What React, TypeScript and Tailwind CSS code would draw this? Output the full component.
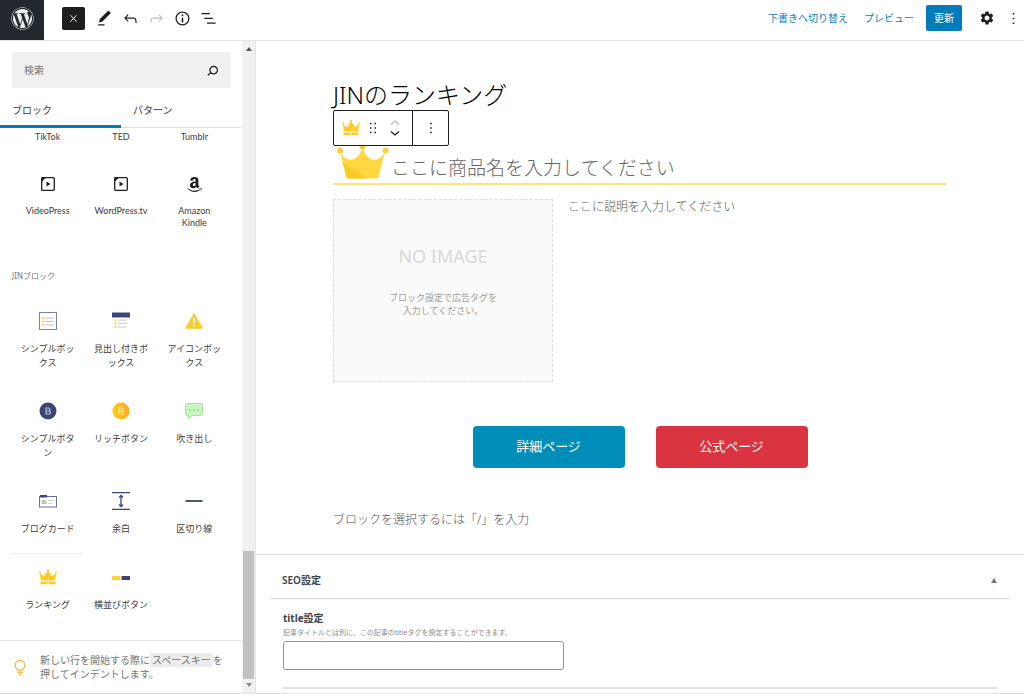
import type { ReactNode } from "react";
import { FaAmazon, FaWordpress } from "react-icons/fa";
import { MdSettings } from "react-icons/md";

type Block = {
  label: string;
  icon: ReactNode;
  active?: boolean;
};

function Glyph({ d, size = 19 }: { d: string; size?: number }) {
  return (
    <svg width={size} height={size} viewBox="0 0 24 24" fill="currentColor" aria-hidden="true">
      <path d={d} />
    </svg>
  );
}

const paths = {
  edit: "M20.1 5.1L16.9 2 6.2 12.7l-1.3 4.4 4.5-1.3L20.1 5.1zM4 20.8h8v-1.5H4v1.5z",
  undo: "M18.3 11.7c-.6-.6-1.4-.9-2.3-.9H6.7l2.9-3.3-1.1-1-4.5 5L8.5 16l1-1-2.7-2.7H16c.5 0 .9.2 1.3.5 1 1 1 3.4 1 4.5v.3h1.5v-.2c0-1.5 0-4.3-1.5-5.7z",
  redo: "M15.6 6.5l-1.1 1 2.9 3.3H8c-.9 0-1.7.3-2.3.9-1.4 1.5-1.4 4.2-1.4 5.6v.2h1.5v-.3c0-1.1 0-3.5 1-4.5.3-.3.7-.5 1.3-.5h9.2L14.5 15l1.1 1.1 4.6-4.6-4.6-5z",
  list: "M13.8 5.2H3v1.5h10.8V5.2zm-3.6 12v1.5H21v-1.5H10.2zm7.2-6H6.6v1.5h10.8v-1.5z",
  info: "M12 3.2c-4.8 0-8.8 3.9-8.8 8.8 0 4.8 3.9 8.8 8.8 8.8 4.8 0 8.8-3.9 8.8-8.8 0-4.8-4-8.8-8.8-8.8zm0 16c-4 0-7.2-3.3-7.2-7.2C4.8 8 8 4.8 12 4.8s7.2 3.3 7.2 7.2c0 4-3.2 7.2-7.2 7.2zM11 17h2v-6h-2v6zm0-8h2V7h-2v2z",
  search:
    "M13.5 6C10.5 6 8 8.5 8 11.5c0 1.1.3 2.1.9 3l-3.4 3 1 1.1 3.4-2.9c1 .9 2.2 1.4 3.6 1.4 3 0 5.5-2.5 5.5-5.5C19 8.5 16.5 6 13.5 6zm0 9.5c-2.2 0-4-1.8-4-4s1.8-4 4-4 4 1.8 4 4-1.8 4-4 4z",
  close: "M13 11.8l6.1-6.3-1-1-6.1 6.2-6.1-6.2-1 1 6.1 6.3-6.5 6.7 1 1 6.5-6.6 6.5 6.6 1-1z",
  more: "M13 19h-2v-2h2v2zm0-6h-2v-2h2v2zm0-6h-2V5h2v2z",
  drag: "M8 7h2V5H8v2zm0 6h2v-2H8v2zm0 6h2v-2H8v2zm6-14v2h2V5h-2zm0 8h2v-2h-2v2zm0 6h2v-2h-2v2z",
};

function CrownIcon() {
  return (
    <svg width="18" height="18" viewBox="0 0 18 18" fill="#fbcb2d" aria-hidden="true">
      <path d="M1.800 12.500.8 5l4.200 3.200L9 2l4 6.200L17.200 5l-1 7.500z" />
      <circle cx="1" cy="4.600" r="1" />
      <circle cx="9" cy="1.800" r="1.100" />
      <circle cx="17" cy="4.600" r="1" />
      <rect x="1.500" y="13.500" width="7" height="2.800" />
      <rect x="9.500" y="13.500" width="7" height="2.800" />
    </svg>
  );
}

function VideoIcon() {
  return (
    <svg width="18" height="18" viewBox="0 0 18 18" aria-hidden="true">
      <rect x="2.700" y="2.700" width="12.600" height="12.600" rx="1" fill="none" stroke="#1e1e1e" strokeWidth="1.300" />
      <path d="M2.500 2.500h4.500L2.500 7z" fill="#1e1e1e" />
      <path d="M7.500 6.500v5l4-2.500z" fill="#1e1e1e" />
    </svg>
  );
}

function SimpleBoxIcon() {
  return (
    <svg width="18" height="18" viewBox="0 0 18 18" aria-hidden="true">
      <rect x=".5" y=".5" width="17" height="17" fill="#fff" stroke="#7781ab" />
      <path d="M3 6h2M3 9.500h2M3 13h2" stroke="#fbd45c" strokeWidth="1.800" />
      <path d="M6 6h9M6 9.500h9M6 13h9" stroke="#c4c4c4" />
    </svg>
  );
}

function HeadingBoxIcon() {
  return (
    <svg width="18" height="18" viewBox="0 0 18 18" aria-hidden="true">
      <rect y="0.500" width="18" height="5" fill="#3b4675" />
      <path d="M2.500 8h2M2.500 11.500h2M2.500 15h2" stroke="#fbd45c" strokeWidth="1.800" />
      <path d="M6 8h9M6 11.500h9M6 15h9" stroke="#c8c8c8" />
    </svg>
  );
}

function WarningIcon() {
  return (
    <svg width="18" height="18" viewBox="0 0 18 18" aria-hidden="true">
      <path d="M9 2 17 16H1z" fill="#fcca2c" stroke="#fcca2c" strokeWidth="1.400" strokeLinejoin="round" />
      <path d="M9 6v5M9 12.500v2" stroke="#fff" strokeWidth="1.800" />
    </svg>
  );
}

function BadgeIcon({ rich }: { rich?: boolean }) {
  return (
    <svg width="18" height="18" viewBox="0 0 18 18" aria-hidden="true">
      <defs>
        <linearGradient id="gold">
          <stop offset="0" stopColor="#fdd00f" />
          <stop offset="1" stopColor="#fca52c" />
        </linearGradient>
      </defs>
      <circle cx="9" cy="9" r="8.500" fill={rich ? "url(#gold)" : "#3b4675"} />
      <path
        d="M7 6h2.500a1.400 1.400 0 0 1 0 3H7zM7 9h3a1.500 1.500 0 0 1 0 3H7z"
        fill="none"
        stroke={rich ? "#ffe9a8" : "#c3c8dc"}
        strokeWidth="1.100"
      />
    </svg>
  );
}

function BalloonIcon() {
  return (
    <svg width="18" height="18" viewBox="0 0 18 18" aria-hidden="true">
      <path
        d="M2.500 1.500h13a2 2 0 0 1 2 2v8a2 2 0 0 1-2 2H7.500L3.500 16.500v-3h-1a2 2 0 0 1-2-2v-8a2 2 0 0 1 2-2z"
        fill="#c9f5c2"
        stroke="#a3e29b"
      />
      <path d="M4 8h2M8 8h2M12 8h2" stroke="#92d38b" strokeWidth="1.600" />
    </svg>
  );
}

function BlogCardIcon() {
  return (
    <svg width="18" height="18" viewBox="0 0 18 18" aria-hidden="true">
      <rect x=".5" y="4.500" width="17" height="10.500" fill="#fff" stroke="#6670a0" />
      <path d="M1 3h7v2.500H1z" fill="#3b4675" />
      <path d="M2.500 8h5v4h-5z" fill="#c4c4c4" />
      <path d="M9 8.500h6.500M9 11.500h4.500" stroke="#cfcfcf" />
    </svg>
  );
}

function SpacerIcon() {
  return (
    <svg width="18" height="18" viewBox="0 0 18 18" fill="none" stroke="#3b4675" aria-hidden="true">
      <path d="M0 .7h18M0 17.300h18" strokeWidth="1.300" />
      <path d="M9 3.500v11M7 5.500l2-2 2 2M7 12.500l2 2 2-2" strokeWidth="1.300" />
    </svg>
  );
}

function LineIcon() {
  return (
    <svg width="18" height="18" viewBox="0 0 18 18" aria-hidden="true">
      <path d="M.5 8h17v2H.5z" fill="#4a5482" />
    </svg>
  );
}

function TwinButtonIcon() {
  return (
    <svg width="18" height="18" viewBox="0 0 18 18" aria-hidden="true">
      <path d="M0 8h8.500v4H0z" fill="#fcd042" />
      <path d="M9.500 8H18v4H9.500z" fill="#3b4675" />
    </svg>
  );
}

const embeds: Block[] = [
  { label: "VideoPress", icon: <VideoIcon /> },
  { label: "WordPress.tv", icon: <VideoIcon /> },
  { label: "Amazon Kindle", icon: <FaAmazon size={17} className="text-[#1e1e1e]" /> },
];

const jinBlocks: Block[] = [
  { label: "シンプルボックス", icon: <SimpleBoxIcon /> },
  { label: "見出し付きボックス", icon: <HeadingBoxIcon /> },
  { label: "アイコンボックス", icon: <WarningIcon /> },
  { label: "シンプルボタン", icon: <BadgeIcon /> },
  { label: "リッチボタン", icon: <BadgeIcon rich /> },
  { label: "吹き出し", icon: <BalloonIcon /> },
  { label: "ブログカード", icon: <BlogCardIcon /> },
  { label: "余白", icon: <SpacerIcon /> },
  { label: "区切り線", icon: <LineIcon /> },
  { label: "ランキング", icon: <CrownIcon />, active: true },
  { label: "横並びボタン", icon: <TwinButtonIcon /> },
];

function BlockItem({ block }: { block: Block }) {
  return (
    <button type="button" className="relative flex flex-col items-center px-2 pt-4 pb-4">
      {block.active && <span className="absolute inset-x-0 top-px h-px bg-[#e8eef5]" />}
      <span className="flex h-[18px] items-center justify-center">{block.icon}</span>
      <span className="mt-3 w-full break-all">{block.label}</span>
    </button>
  );
}

function Header() {
  return (
    <header className="flex h-[41px] items-center border-b border-[#e2e2e2] pr-px text-[#1e1e1e]">
      <a href="#" aria-label="WordPress" className="flex h-10 w-11 items-center justify-center self-start bg-[#23282e] pb-1 text-[#e8eaec]">
        <FaWordpress size={23} />
      </a>
      <div className="flex items-center gap-[7px] pb-1 pl-[18px]">
        <button type="button" aria-label="閉じる" className="mr-[3px] flex size-[23px] items-center justify-center rounded-xs bg-[#1e1e1e] text-white">
          <Glyph d={paths.close} size={11} />
        </button>
        <button type="button" aria-label="ツール"><Glyph d={paths.edit} /></button>
        <button type="button" aria-label="元に戻す"><Glyph d={paths.undo} /></button>
        <button type="button" aria-label="やり直す" className="text-[#bdbdbd]"><Glyph d={paths.redo} /></button>
        <button type="button" aria-label="詳細"><Glyph d={paths.info} /></button>
        <button type="button" aria-label="リスト表示"><Glyph d={paths.list} /></button>
      </div>
      <div className="ml-auto flex items-center pb-1 text-[10px] text-[#0a7fbd]">
        <button type="button">下書きへ切り替え</button>
        <button type="button" className="ml-4">プレビュー</button>
        <button type="button" className="ml-3 flex h-[26px] w-9 items-center justify-center rounded-xs bg-[#007cba] text-white">更新</button>
        <button type="button" aria-label="設定" className="ml-[17px] text-[#1e1e1e]"><MdSettings size={16} /></button>
        <button type="button" aria-label="オプション" className="ml-[9px] text-[#1e1e1e]"><Glyph d={paths.more} /></button>
      </div>
    </header>
  );
}

function Inserter() {
  return (
    <aside className="flex w-[242px] shrink-0 flex-col bg-white text-[#3c3c3c]">
      <div className="mt-[11px] mr-[11px] ml-3 flex h-9 items-center rounded-xs bg-[#f0f0f0] pr-[9px] pl-3">
        <input type="text" aria-label="検索" placeholder="検索" className="min-w-0 flex-1 text-[10px] outline-none placeholder:text-[#757575]" />
        <button type="button" aria-label="検索する" className="text-[#1e1e1e]"><Glyph d={paths.search} /></button>
      </div>
      <div className="flex border-b border-[#e0e0e0] text-[10px]">
        <button type="button" className="-mb-px h-10 w-1/2 border-b-3 border-[#007cba] pt-2 pl-3 text-left">ブロック</button>
        <button type="button" className="h-9 w-1/2 pt-2 pl-3 text-left">パターン</button>
      </div>

      <div className="px-[11px] text-[9px]">
        <div className="grid grid-cols-3 pt-[3px] pb-4 text-center font-['Lato',sans-serif] leading-3">
          <span>TikTok</span>
          <span>TED</span>
          <span>Tumblr</span>
        </div>
        <div className="grid grid-cols-3 text-center font-['Lato',sans-serif] leading-3">
          {embeds.map((block) => (
            <button key={block.label} type="button" className="flex flex-col items-center pt-4 pb-4">
              <span className="flex h-[18px] items-center justify-center">{block.icon}</span>
              <span className="mt-3 max-w-16 px-1">{block.label}</span>
            </button>
          ))}
        </div>
        <h2 className="mt-6 mb-[13px] pl-px text-[8px] leading-[14px] text-[#757575]">JINブロック</h2>
        <div className="grid grid-cols-3 text-center leading-[14px]">
          {jinBlocks.map((block) => (
            <BlockItem key={block.label} block={block} />
          ))}
        </div>
      </div>

      <div className="mt-auto flex items-center gap-3 border-t border-[#e2e2e2] py-3 pl-3 text-[#757575]">
        <svg width="16" height="18" viewBox="0 0 16 18" fill="none" stroke="#f5bd4f" strokeWidth="1.400" aria-hidden="true">
          <path d="M6 12C4 10.800 3.200 9 3.200 7a4.800 4.800 0 0 1 9.600 0c0 2-.8 3.800-2.800 5z" />
          <path d="M5 14.200h6M6.500 16.500h3" />
        </svg>
        <p className="text-[10px] leading-[14px]">
          新しい行を開始する際に
          <kbd className="bg-[#ececec] px-0.5 font-[inherit]">スペースキー</kbd>を<br />
          押してインデントします。
        </p>
      </div>
    </aside>
  );
}

function ScrollTrack() {
  return (
    <div aria-hidden="true" className="flex w-[14px] shrink-0 flex-col items-center border-r border-[#e4e4e4] bg-[#f1f1f1] py-1.5">
      <svg width="6" height="4" viewBox="0 0 6 4" fill="#555"><path d="M3 0l3 4H0z" /></svg>
      <div className="mt-auto h-32 w-[11px] bg-[#c1c1c1]" />
      <svg width="6" height="4" viewBox="0 0 6 4" fill="#888" className="mt-1"><path d="M0 0h6L3 4z" /></svg>
    </div>
  );
}

function BlockToolbar() {
  return (
    <div className="absolute bottom-full left-0 flex h-9 rounded-xs border border-[#1e1e1e] bg-white text-[#1e1e1e]">
      <div className="flex items-center border-r border-[#1e1e1e] pr-3 pl-2">
        <button type="button" aria-label="ランキング"><CrownIcon /></button>
        <button type="button" aria-label="ドラッグ" className="ml-1"><Glyph d={paths.drag} size={18} /></button>
        <div className="ml-2 flex flex-col gap-1.5">
          <button type="button" aria-label="上に移動" className="text-[#b5b5b5]">
            <svg width="10" height="5" viewBox="0 0 10 5" fill="none" stroke="currentColor" strokeWidth="1.200"><path d="M1 4.500l4-3.500 4 3.500" /></svg>
          </button>
          <button type="button" aria-label="下に移動">
            <svg width="10" height="5" viewBox="0 0 10 5" fill="none" stroke="currentColor" strokeWidth="1.300"><path d="M1 .5L5 4 9 .5" /></svg>
          </button>
        </div>
      </div>
      <button type="button" aria-label="オプション" className="flex w-[35px] items-center justify-center">
        <Glyph d={paths.more} size={18} />
      </button>
    </div>
  );
}

function RankingBlock() {
  return (
    <section className="relative mt-[33px]">
      <BlockToolbar />
      <div className="flex h-[39px] items-start border-b-2 border-[#ffe283] pl-[3px]">
        <svg width="53" height="33" viewBox="0 0 53 33" aria-hidden="true">
          <path d="M4 6c5 9 16 13 22.500-4C33 19 44 15 49 6l-7 26.500H11z" fill="#ffd840" />
          <path d="M6.500 16c7 6 16 8 23 16.500H11z" fill="#f8cb25" />
          <circle cx="4" cy="4.500" r="3" fill="#fbcd35" />
          <circle cx="26.500" cy="0.500" r="3" fill="#fbcd35" />
          <circle cx="49.500" cy="4.500" r="3" fill="#fbcd35" />
        </svg>
        <p className="ml-0.5 pt-2 text-[19px] leading-7 font-light text-[#666]">ここに商品名を入力してください</p>
      </div>
      <div className="mt-[14px] flex gap-[15px]">
        <div className="flex h-[183px] w-[220px] shrink-0 flex-col items-center border border-dashed border-[#d9dce0] bg-[#fafafb] pt-11 text-center">
          <p className="text-[18px] leading-6 text-[#d8d8d8]">NO IMAGE</p>
          <p className="mt-[23px] text-[9px] leading-[13px] text-[#9a9a9a]">
            ブロック設定で広告タグを<br />入力してください。
          </p>
        </div>
        <p className="text-[12px] leading-4 font-light text-[#555]">ここに説明を入力してください</p>
      </div>
      <div className="mt-11 flex justify-center gap-[31px] text-[13px] text-white">
        <a href="#" className="flex h-[42px] w-[152px] items-center justify-center rounded bg-[#008db9]">詳細ページ</a>
        <a href="#" className="flex h-[42px] w-[152px] items-center justify-center rounded bg-[#d93440]">公式ページ</a>
      </div>
    </section>
  );
}

function SeoPanel() {
  return (
    <section className="mt-auto border-t border-[#e2e2e2] px-[15px] text-[#3c434a]">
      <button type="button" className="flex h-11 w-full items-center justify-between border-b border-[#cfd2d5] pt-2 pr-3 pl-[11px] text-left">
        <span className="text-[10px] font-semibold">SEO設定</span>
        <svg width="6" height="5" viewBox="0 0 6 5" fill="#6b7480" aria-hidden="true"><path d="M3 0l3 5H0z" /></svg>
      </button>
      <div className="mx-[11px] border-b-2 border-[#e2e2e2] pt-3 pb-[17px]">
        <label htmlFor="seo-title" className="block pl-px text-[10px] leading-[14px] font-bold">title設定</label>
        <p className="pl-px text-[7px] leading-4 text-[#8a8a8a]">
          記事タイトルとは別に、この記事のtitleタグを設定することができます。
        </p>
        <input id="seo-title" type="text" className="ml-px block h-[29px] w-[281px] rounded-[3px] border border-[#8c96a0] bg-white px-2 text-xs" />
      </div>
      <div className="h-1" />
    </section>
  );
}

export default function App() {
  return (
    <div className="flex min-h-screen flex-col border-b border-[#e2e2e2] bg-white font-['Noto_Sans','Noto_Sans_CJK_JP',sans-serif]">
      <Header />
      <div className="flex flex-1">
        <Inserter />
        <ScrollTrack />
        <main className="flex min-w-0 flex-1 flex-col">
          <div className="mx-auto w-4/5 max-w-[614px] pt-9">
            <h1 className="text-2xl leading-9 font-light text-black">JINのランキング</h1>
            <RankingBlock />
            <p className="mt-11 text-[12px] leading-4 font-light text-[#555]">ブロックを選択するには「/」を入力</p>
          </div>
          <SeoPanel />
        </main>
      </div>
    </div>
  );
}
